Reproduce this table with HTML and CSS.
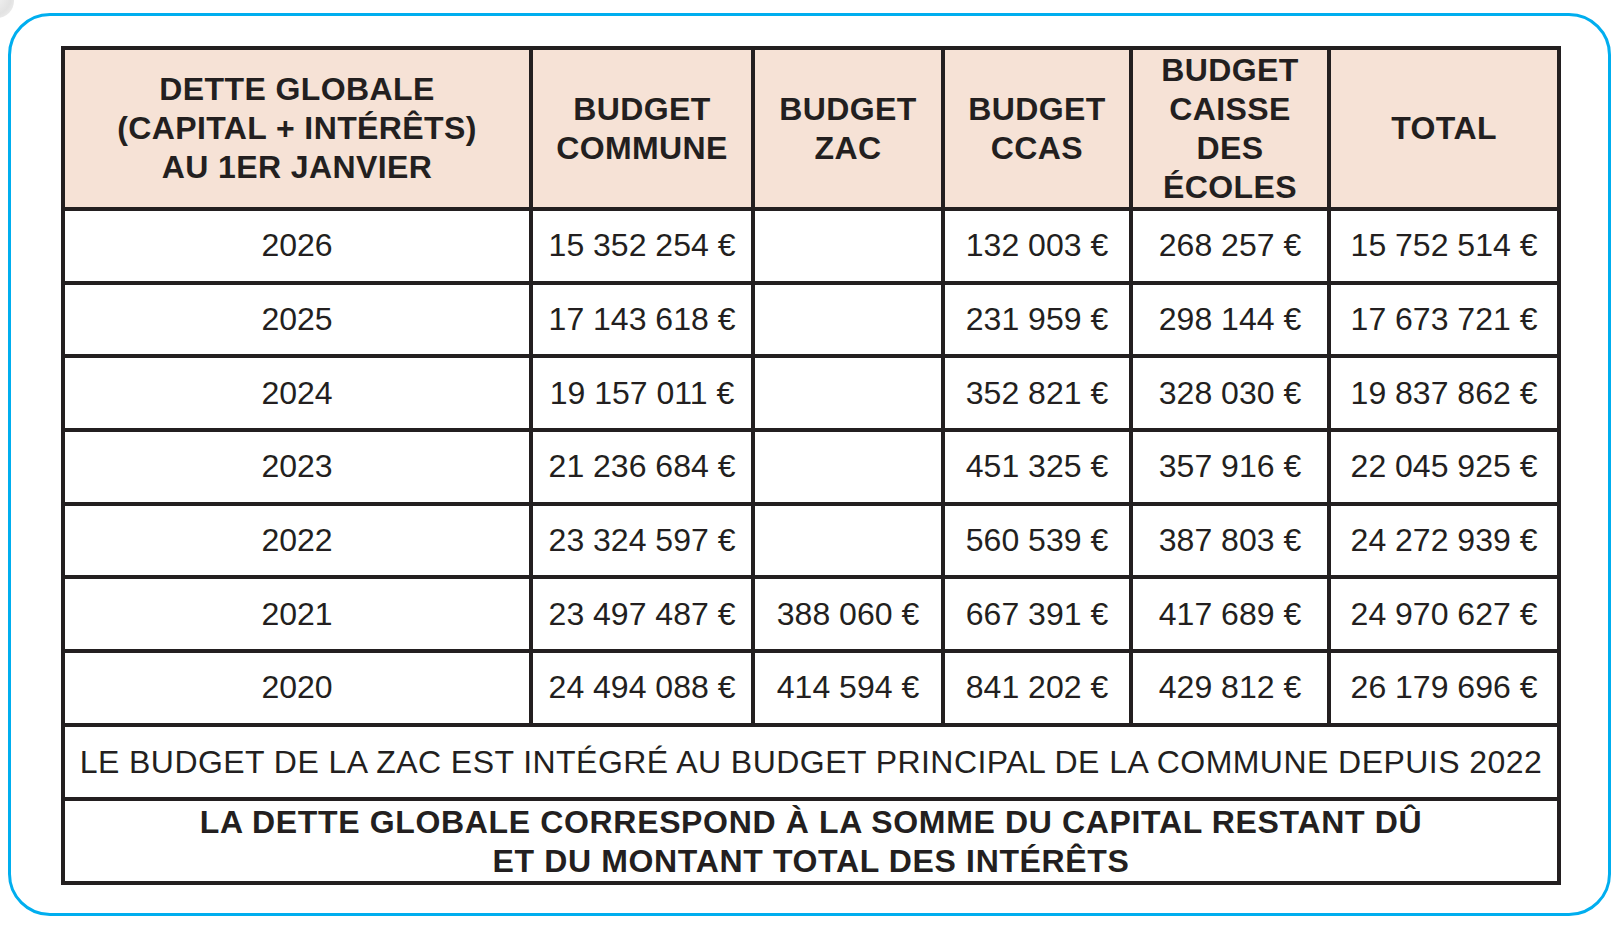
FILE: index.html
```html
<!DOCTYPE html>
<html lang="fr">
<head>
<meta charset="utf-8">
<title>Dette globale</title>
<link rel="stylesheet" href="styles.css">
</head>
<body>
<div class="curl"></div>
<div class="frame">
  <div class="debt-table">
    <div class="cell head">DETTE GLOBALE<br>(CAPITAL + INTÉRÊTS)<br>AU 1ER JANVIER</div>
    <div class="cell head">BUDGET<br>COMMUNE</div>
    <div class="cell head">BUDGET<br>ZAC</div>
    <div class="cell head">BUDGET<br>CCAS</div>
    <div class="cell head">BUDGET<br>CAISSE<br>DES<br>ÉCOLES</div>
    <div class="cell head">TOTAL</div>

    <div class="cell">2026</div>
    <div class="cell">15 352 254 €</div>
    <div class="cell"></div>
    <div class="cell">132 003 €</div>
    <div class="cell">268 257 €</div>
    <div class="cell">15 752 514 €</div>

    <div class="cell">2025</div>
    <div class="cell">17 143 618 €</div>
    <div class="cell"></div>
    <div class="cell">231 959 €</div>
    <div class="cell">298 144 €</div>
    <div class="cell">17 673 721 €</div>

    <div class="cell">2024</div>
    <div class="cell">19 157 011 €</div>
    <div class="cell"></div>
    <div class="cell">352 821 €</div>
    <div class="cell">328 030 €</div>
    <div class="cell">19 837 862 €</div>

    <div class="cell">2023</div>
    <div class="cell">21 236 684 €</div>
    <div class="cell"></div>
    <div class="cell">451 325 €</div>
    <div class="cell">357 916 €</div>
    <div class="cell">22 045 925 €</div>

    <div class="cell">2022</div>
    <div class="cell">23 324 597 €</div>
    <div class="cell"></div>
    <div class="cell">560 539 €</div>
    <div class="cell">387 803 €</div>
    <div class="cell">24 272 939 €</div>

    <div class="cell">2021</div>
    <div class="cell">23 497 487 €</div>
    <div class="cell">388 060 €</div>
    <div class="cell">667 391 €</div>
    <div class="cell">417 689 €</div>
    <div class="cell">24 970 627 €</div>

    <div class="cell">2020</div>
    <div class="cell">24 494 088 €</div>
    <div class="cell">414 594 €</div>
    <div class="cell">841 202 €</div>
    <div class="cell">429 812 €</div>
    <div class="cell">26 179 696 €</div>

    <div class="cell full note">LE BUDGET DE LA ZAC EST INTÉGRÉ AU BUDGET PRINCIPAL DE LA COMMUNE DEPUIS 2022</div>
    <div class="cell full note-bold">LA DETTE GLOBALE CORRESPOND À LA SOMME DU CAPITAL RESTANT DÛ<br>ET DU MONTANT TOTAL DES INTÉRÊTS</div>
  </div>
</div>
</body>
</html>
```

FILE: styles.css
```css
html, body {
  margin: 0;
  padding: 0;
  background: #ffffff;
}

body {
  font-family: "Liberation Sans", Arial, sans-serif;
  color: #231f20;
  position: relative;
  width: 1622px;
  height: 926px;
  overflow: hidden;
}

.curl {
  position: absolute;
  left: -20px;
  top: -16px;
  width: 34px;
  height: 34px;
  border-radius: 50%;
  background: radial-gradient(circle at 40% 40%, #f4f4f4 0%, #e2e2e2 60%, #ececec 80%, rgba(255,255,255,0) 100%);
}

.frame {
  box-sizing: border-box;
  margin: 13px 0 0 8px;
  width: 1603px;
  border: 3px solid #00aeef;
  border-radius: 42px;
  padding: 30px 47px 28px 50px;
}

.debt-table {
  display: grid;
  grid-template-columns: 464px 218px 186px 184px 194px 226px;
  grid-template-rows: 157px repeat(7, 69.7px) 70.5px 80px;
  gap: 4px;
  padding: 4px;
  background: #231f20;
  width: 1500px;
  box-sizing: border-box;
}

.cell {
  background: #ffffff;
  display: flex;
  align-items: center;
  justify-content: center;
  text-align: center;
  font-size: 32px;
  line-height: 39px;
  white-space: nowrap;
}

.head {
  background: #f6e2d6;
  font-weight: bold;
  letter-spacing: 0.4px;
}

.full {
  grid-column: 1 / -1;
}

.note {
  letter-spacing: 0.45px;
}

.note-bold {
  font-weight: bold;
  letter-spacing: 0.65px;
  line-height: 39px;
  align-items: flex-start;
  padding-top: 2px;
}
```
